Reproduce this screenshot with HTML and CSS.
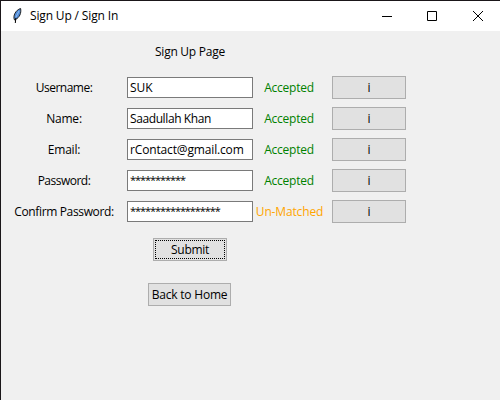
FILE: index.html
```html
<!DOCTYPE html>
<html lang="en">
<head>
<meta charset="utf-8">
<title>Sign Up / Sign In</title>
<link rel="stylesheet" href="styles.css">
</head>
<body>
<div class="window">
  <header class="titlebar">
    <svg class="feather" width="12" height="17" viewBox="0 0 12 17">
      <path d="M3.5 13 C1.6 9 4.6 3 9.6 1.5 C10.5 6 8.6 10.5 4.5 12.5Z" fill="#4f8ad6" stroke="#222" stroke-width="1"/>
      <path d="M8 4 L5 10" stroke="#8fbcf0" stroke-width="1" fill="none"/>
      <path d="M4.8 11 L4.3 16" stroke="#000" stroke-width="1" fill="none"/>
    </svg>
    <span class="title">Sign Up / Sign In</span>
    <div class="controls">
      <svg width="10" height="10" viewBox="0 0 10 10"><path d="M0 5.5H10"/></svg>
      <svg width="10" height="10" viewBox="0 0 10 10"><path d="M.5 .5H9.5V9.5H.5Z"/></svg>
      <svg width="10" height="10" viewBox="0 0 10 10"><path d="M0 0L10 10M10 0L0 10"/></svg>
    </div>
  </header>
  <main class="form">
    <h1 class="heading">Sign Up Page</h1>
    <div class="row"><span class="label tight">Username:</span><div class="entry">SUK</div><span class="status ok">Accepted</span><button class="button">i</button></div>
    <div class="row"><span class="label">Name:</span><div class="entry name">Saadullah Khan</div><span class="status ok">Accepted</span><button class="button">i</button></div>
    <div class="row"><span class="label">Email:</span><div class="entry mail">rContact@gmail.com</div><span class="status ok">Accepted</span><button class="button">i</button></div>
    <div class="row"><span class="label tight">Password:</span><div class="entry stars">***********</div><span class="status ok">Accepted</span><button class="button">i</button></div>
    <div class="row"><span class="label confirm">Confirm Password:</span><div class="entry stars">******************</div><span class="status bad">Un-Matched</span><button class="button">i</button></div>
    <div class="actions">
      <button class="button submit"><span class="focus">Submit</span></button>
      <button class="button home">Back to Home</button>
    </div>
  </main>
</div>
</body>
</html>
```
FILE: styles.css
```css
* { box-sizing: border-box; }
body { margin: 0; }
.window {
  width: 500px;
  height: 400px;
  overflow: hidden;
  border-top: 1px solid #1a1619;
  border-left: 1px solid #1a1619;
  background: #f0f0f0;
  color: #000;
  font: 12px/16px "Open Sans", "Noto Sans", sans-serif;
}
.titlebar {
  display: flex;
  align-items: center;
  height: 30px;
  padding: 0 17px 0 10px;
  background: #fff;
}
.feather { flex: none; margin-top: -2px; }
.title { margin-left: 7px; letter-spacing: -0.15px; white-space: nowrap; }
.controls { display: flex; gap: 35px; margin-left: auto; }
.controls svg { display: block; fill: none; stroke: #000; stroke-width: 1; }
.controls svg:last-child { margin-left: 1px; }
.form { padding-top: 13px; }
.heading {
  width: 126px;
  margin: 0 0 16px 126px;
  font: inherit;
  letter-spacing: -0.25px;
  text-align: center;
}
.row {
  display: grid;
  grid-template-columns: 126px 126px 73px 74px;
  align-items: center;
  height: 23px;
  margin-bottom: 8px;
  white-space: nowrap;
}
.row .button { margin-left: 6px; }
.label, .status { text-align: center; }
.label { letter-spacing: -0.2px; }
.tight { letter-spacing: -0.5px; }
.confirm { letter-spacing: -0.35px; }
.entry {
  height: 21px;
  padding: 0 2px;
  overflow: hidden;
  border: 1px solid #7a7a7a;
  background: #fff;
  line-height: 20px;
}
.name { letter-spacing: -0.4px; }
.mail { letter-spacing: -0.15px; }
.stars { font-size: 11px; line-height: 18px; letter-spacing: -1.07px; }
.ok { padding-right: 1px; color: #008000; letter-spacing: -0.25px; }
.bad { color: #ffa500; letter-spacing: -0.15px; }
.button {
  width: 74px;
  height: 23px;
  padding: 0;
  border: 1px solid #adadad;
  border-radius: 0;
  background: #e1e1e1;
  color: #000;
  font: inherit;
  line-height: 19px;
}
.actions {
  display: flex;
  flex-direction: column;
  align-items: center;
  gap: 22px;
  width: 126px;
  margin: 15px 0 0 126px;
}
.submit { padding: 1px; }
.focus { display: block; height: 19px; border: 1px dotted #000; line-height: 17px; letter-spacing: -0.3px; }
.home { width: 83px; margin-right: 1px; letter-spacing: -0.2px; white-space: nowrap; }
```
